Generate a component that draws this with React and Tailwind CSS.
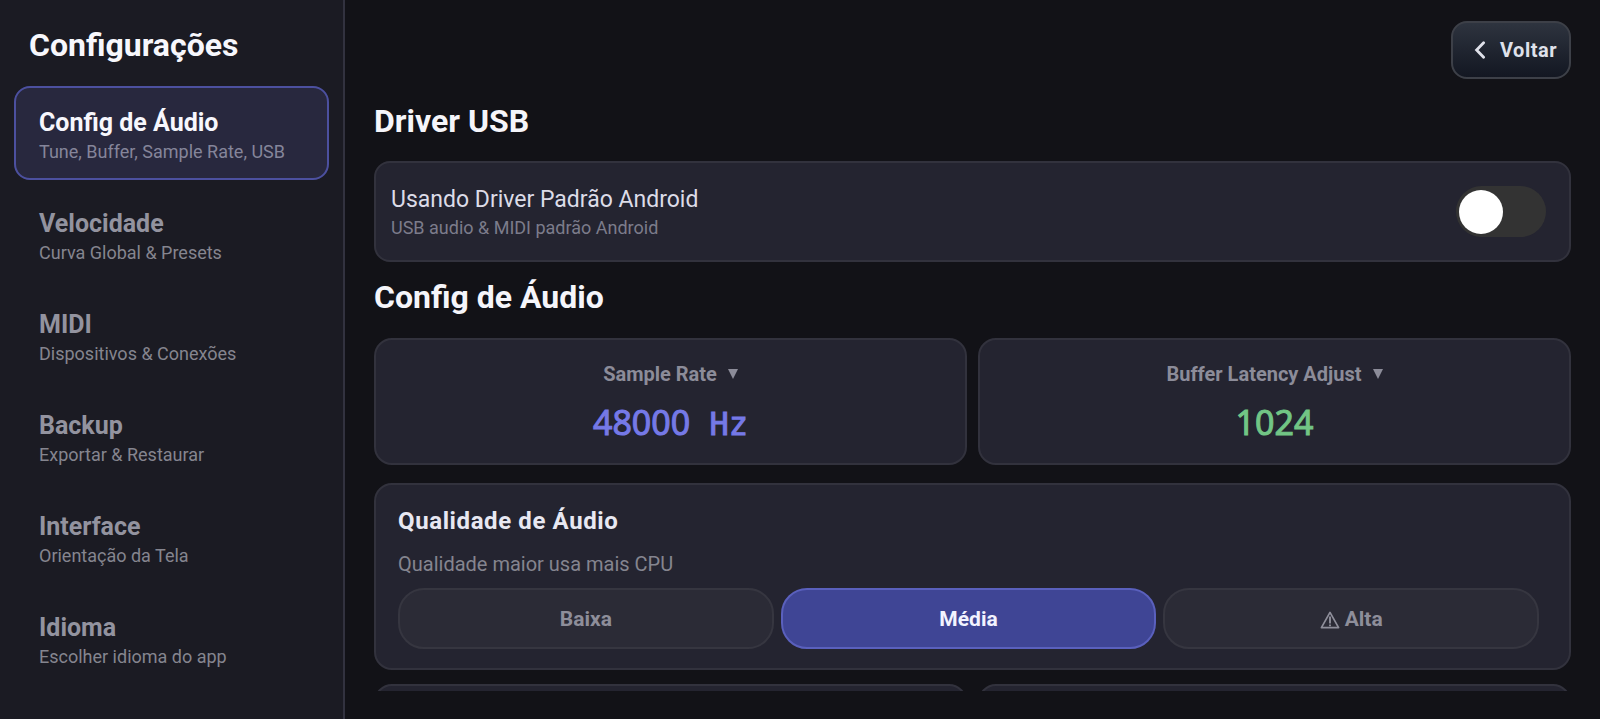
import { useState } from 'react'

const SECTIONS = [
  { id: 'audio', title: 'Config de Áudio', subtitle: 'Tune, Buffer, Sample Rate, USB' },
  { id: 'velocity', title: 'Velocidade', subtitle: 'Curva Global & Presets' },
  { id: 'midi', title: 'MIDI', subtitle: 'Dispositivos & Conexões' },
  { id: 'backup', title: 'Backup', subtitle: 'Exportar & Restaurar' },
  { id: 'interface', title: 'Interface', subtitle: 'Orientação da Tela' },
  { id: 'language', title: 'Idioma', subtitle: 'Escolher idioma do app' },
]

const QUALITIES = [
  { id: 'low', label: 'Baixa' },
  { id: 'medium', label: 'Média' },
  { id: 'high', label: 'Alta', warning: true },
]

function WarningIcon() {
  return (
    <svg viewBox="0 0 20 18" className="w-5 h-[18px]" fill="none" stroke="currentColor" aria-hidden="true">
      <path d="M10 1.4 18.6 16.6H1.4Z" strokeWidth="1.7" strokeLinejoin="round" />
      <path d="M10 5.6v7M10 13.6v1.6" strokeWidth="1.9" />
    </svg>
  )
}

function NavItem({ section, active, onClick }) {
  return (
    <button
      type="button"
      onClick={onClick}
      aria-current={active ? 'page' : undefined}
      className={
        'flex flex-col items-start justify-center h-[94px] px-[23px] pt-2 rounded-2xl border-2 text-left ' +
        (active ? 'bg-[#28283e] border-[#4c509f]' : 'border-transparent')
      }
    >
      <span className={'text-[25px] leading-[30px] font-bold ' + (active ? 'text-[#f7f7fd]' : 'text-[#93939f]')}>
        {section.title}
      </span>
      <span className={'text-lg leading-7 ' + (active ? 'text-[#85859a]' : 'text-[#85858f]')}>{section.subtitle}</span>
    </button>
  )
}

function ValueCard({ label, children }) {
  return (
    <button
      type="button"
      aria-haspopup="listbox"
      className="flex-1 h-[127px] flex flex-col items-center justify-center gap-4 rounded-[18px] border-2 border-[#32323d] bg-[#242430]"
    >
      <span className="flex items-center gap-[11px] text-xl leading-6 font-bold text-[#8c8c99]">
        {label}
        <svg viewBox="0 0 10 10" className="w-[10px] h-[10px]" fill="currentColor" aria-hidden="true">
          <path d="M0 0h10L5 10Z" />
        </svg>
      </span>
      <span className="flex items-baseline h-10 font-['Noto_Sans',sans-serif] text-[34px] leading-10 whitespace-pre [-webkit-text-stroke:1px]">
        {children}
      </span>
    </button>
  )
}

function Heading({ children }) {
  return <h2 className="text-[32px] leading-10 font-bold text-[#f5f5fa]">{children}</h2>
}

export default function App() {
  const [section, setSection] = useState('audio')
  const [quality, setQuality] = useState('medium')
  const [usbDriver, setUsbDriver] = useState(false)

  return (
    <div className="flex h-screen bg-[#121217] font-['Roboto',sans-serif]">
      <aside className="w-[345px] shrink-0 bg-[#1b1b23] border-r-2 border-[#32323f] px-[14px] pt-[25px]">
        <h1 className="px-[15px] text-[32px] leading-10 font-bold text-[#f7f7fc]">Configurações</h1>
        <nav className="mt-[21px] flex flex-col gap-[7px]">
          {SECTIONS.map((s) => (
            <NavItem key={s.id} section={s} active={s.id === section} onClick={() => setSection(s.id)} />
          ))}
        </nav>
      </aside>

      <main className="flex-1 min-w-0 flex flex-col px-[29px] pt-[21px] pb-7">
        <div className="flex justify-end">
          <button
            type="button"
            className="flex items-center gap-[14px] h-[58px] pl-[21px] pr-3 rounded-2xl border-2 border-[#3d4048] bg-linear-to-b from-[#2e343f] to-[#131722] text-xl font-bold tracking-wide text-[#dfe1ea]"
          >
            <svg viewBox="0 0 12 18" className="w-3 h-[18px]" fill="none" stroke="currentColor" strokeWidth="2.8" strokeLinecap="round" aria-hidden="true">
              <path d="M9.6 1.8 2.6 9l7 7.2" />
            </svg>
            Voltar
          </button>
        </div>

        <div className="flex-1 min-h-0 mt-[22px] overflow-y-auto [scrollbar-width:none]">
          <Heading>Driver USB</Heading>
          <div className="mt-5 flex items-center justify-between h-[101px] pl-[15px] pr-[23px] rounded-2xl border-2 border-[#32323d] bg-[#242430]">
            <label htmlFor="usb-driver" className="flex flex-col pt-1">
              <span className="text-[23px] leading-7 text-[#dcdce8]">Usando Driver Padrão Android</span>
              <span className="text-lg leading-7 text-[#7c7c8b]">USB audio &amp; MIDI padrão Android</span>
            </label>
            <input
              id="usb-driver"
              type="checkbox"
              role="switch"
              checked={usbDriver}
              onChange={(e) => setUsbDriver(e.target.checked)}
              className="appearance-none flex items-center w-[90px] h-[51px] px-[3px] rounded-full bg-[#333333] before:w-11 before:h-11 before:rounded-full before:bg-white checked:justify-end checked:bg-[#3f4595]"
            />
          </div>

          <div className="mt-[15px]">
            <Heading>Config de Áudio</Heading>
          </div>
          <div className="mt-[21px] flex gap-[11px]">
            <ValueCard label="Sample Rate">
              <span className="text-[#7579e7]">48000</span>
              <span className="font-['DejaVu_Sans_Mono',monospace] text-[32px] text-[#7579e7]"> Hz</span>
            </ValueCard>
            <ValueCard label="Buffer Latency Adjust">
              <span className="text-[#72c585]">1024</span>
            </ValueCard>
          </div>

          <section className="mt-[18px] h-[187px] pt-[22px] pl-[22px] pr-[30px] rounded-[18px] border-2 border-[#32323d] bg-[#242430]">
            <h3 className="text-2xl leading-7 font-bold tracking-wide text-[#e8e8f2]">Qualidade de Áudio</h3>
            <p className="mt-[17px] text-xl leading-6 text-[#85858f]">Qualidade maior usa mais CPU</p>
            <div className="mt-3 flex gap-[7px]">
              {QUALITIES.map((q) => (
                <button
                  key={q.id}
                  type="button"
                  aria-pressed={q.id === quality}
                  onClick={() => setQuality(q.id)}
                  className={
                    'flex-1 h-[61px] pt-[2px] flex items-center justify-center gap-[5px] rounded-[26px] border-2 text-[21px] font-bold ' +
                    (q.id === quality
                      ? 'bg-[#3f4595] border-[#5a60bd] text-[#f2f3ff]'
                      : 'bg-[#2b2b36] border-[#363640] text-[#8e8e9a]')
                  }
                >
                  {q.warning && <WarningIcon />}
                  {q.label}
                </button>
              ))}
            </div>
          </section>

          <div className="mt-[14px] flex gap-[11px]">
            <div className="flex-1 h-[127px] rounded-[18px] border-2 border-[#32323d] bg-[#242430]" />
            <div className="flex-1 h-[127px] rounded-[18px] border-2 border-[#32323d] bg-[#242430]" />
          </div>
        </div>
      </main>
    </div>
  )
}
